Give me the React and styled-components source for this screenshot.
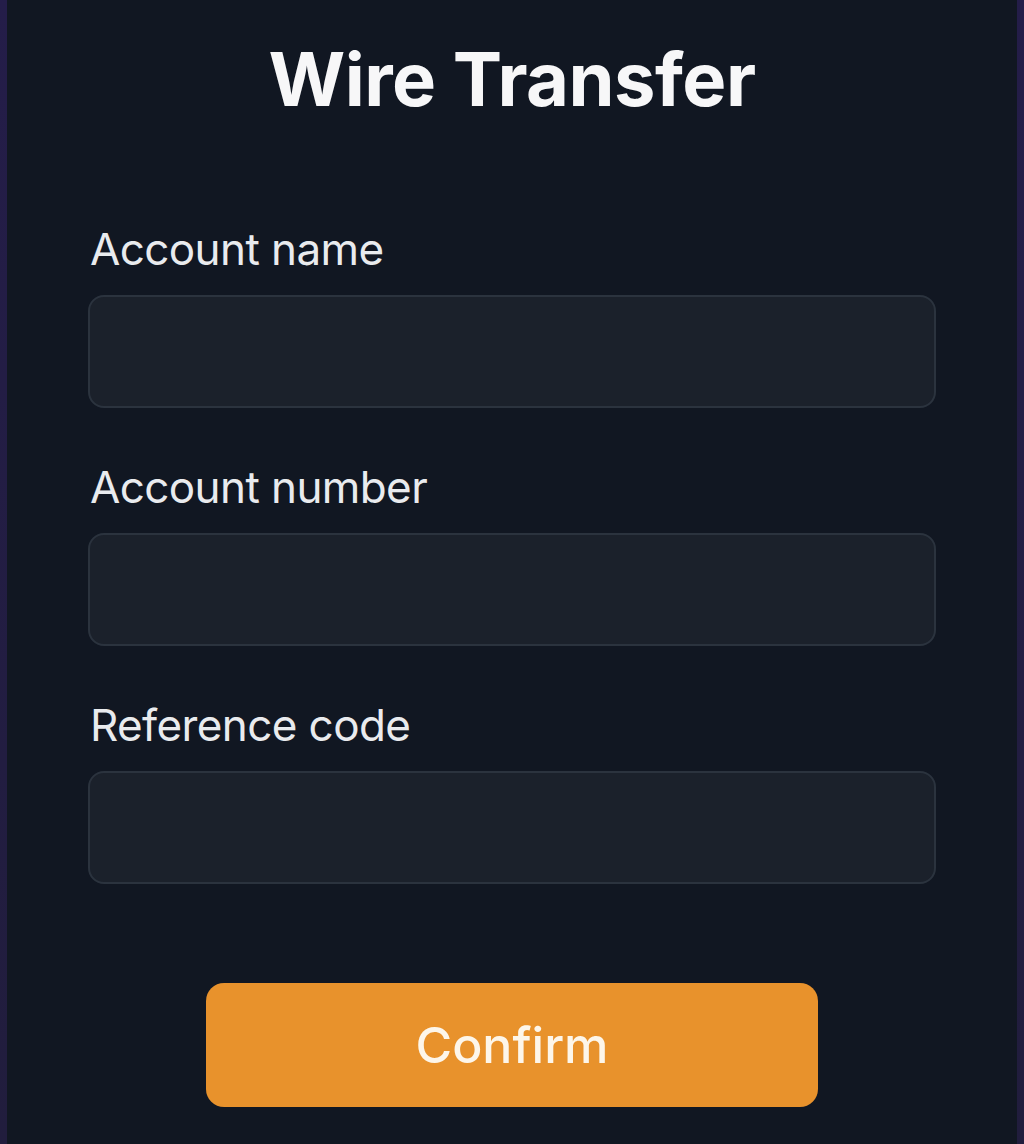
import React from "react";
import styled, { createGlobalStyle } from "styled-components";

const GlobalStyle = createGlobalStyle`
  html, body {
    margin: 0;
    padding: 0;
    background: #221c42;
  }
  body {
    font-family: Inter, "Noto Sans", "Liberation Sans", sans-serif;
    -webkit-font-smoothing: antialiased;
  }
  * { box-sizing: border-box; }
`;

const Frame = styled.div`
  display: flex;
  justify-content: center;
  min-height: 1144px;
  padding: 0 7px;
  background: linear-gradient(180deg, #241d49 0%, #211d3d 100%);
`;

const Card = styled.form`
  flex: 1;
  display: flex;
  flex-direction: column;
  align-items: center;
  padding: 42px 81px 0;
  background: #111722;
`;

const Title = styled.h1`
  margin: 0 0 111px;
  font-size: 74px;
  line-height: 1;
  font-weight: 700;
  color: #f7f7f8;
  letter-spacing: -0.5px;
`;

const Fields = styled.div`
  width: 100%;
  display: flex;
  flex-direction: column;
  gap: 57px;
`;

const Field = styled.label`
  display: flex;
  flex-direction: column;
  gap: 24px;
`;

const LabelText = styled.span`
  font-size: 44px;
  line-height: 1;
  font-weight: 400;
  color: #e9ebee;
  letter-spacing: -0.6px;
  padding-left: 2px;
`;

const Input = styled.input`
  width: 100%;
  height: 113px;
  border-radius: 16px;
  border: 2px solid #2b333e;
  background: #1b212b;
  color: #e9ebee;
  font: inherit;
  font-size: 40px;
  padding: 0 28px;
  outline: none;
`;

const Button = styled.button`
  margin-top: 99px;
  width: 612px;
  height: 124px;
  border: none;
  border-radius: 18px;
  background: #e8922c;
  color: #fdf6ea;
  font-family: inherit;
  font-size: 50px;
  font-weight: 500;
  cursor: pointer;
`;

const fields = ["Account name", "Account number", "Reference code"];

export default function App() {
  return (
    <>
      <GlobalStyle />
      <Frame>
        <Card onSubmit={(e) => e.preventDefault()}>
          <Title>Wire Transfer</Title>
          <Fields>
            {fields.map((f) => (
              <Field key={f}>
                <LabelText>{f}</LabelText>
                <Input type="text" />
              </Field>
            ))}
          </Fields>
          <Button type="submit">Confirm</Button>
        </Card>
      </Frame>
    </>
  );
}
